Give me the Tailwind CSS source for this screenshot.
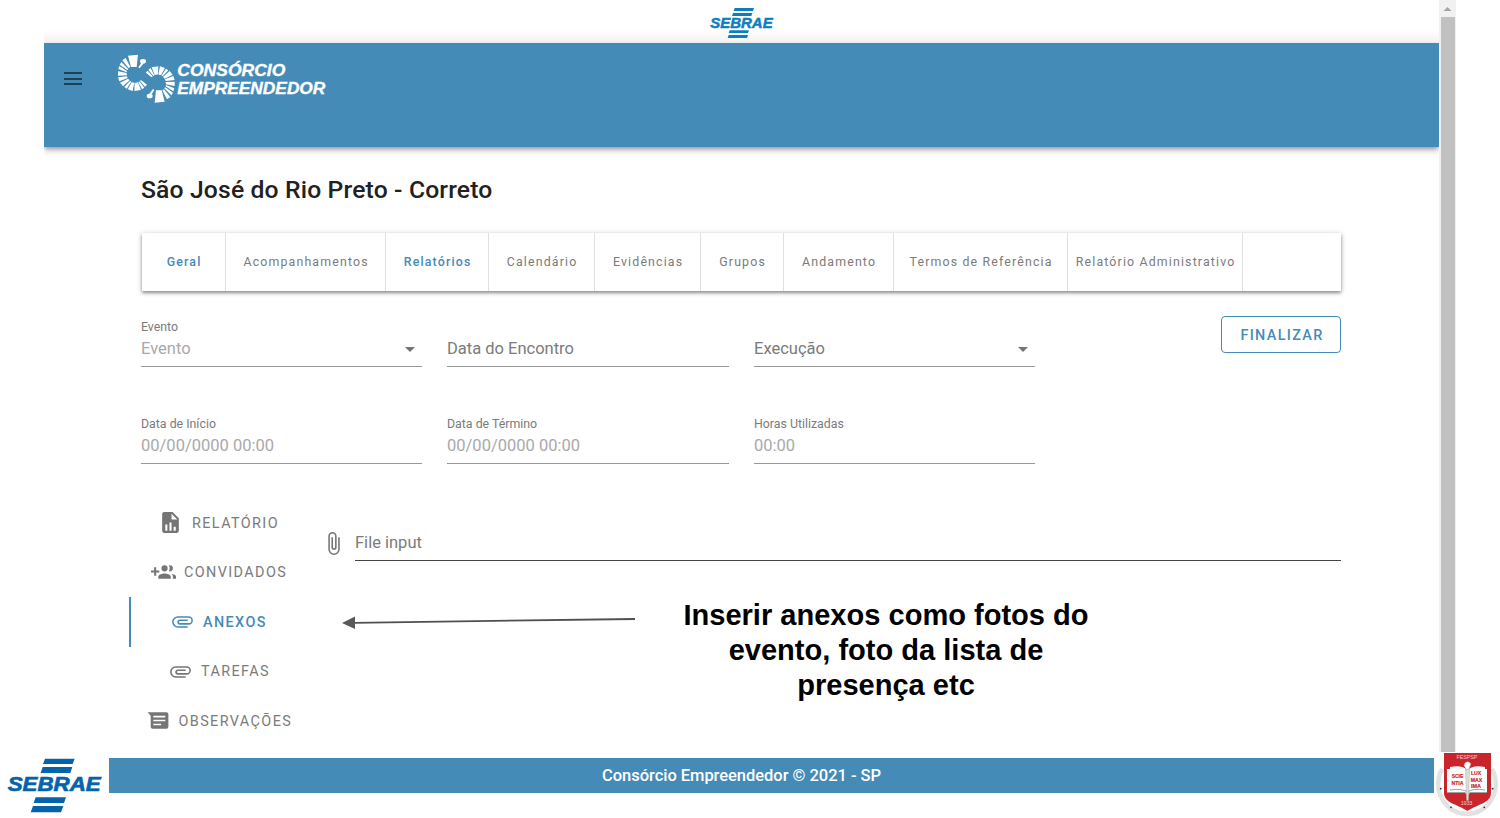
<!DOCTYPE html>
<html lang="pt-BR">
<head>
<meta charset="utf-8">
<title>Consórcio Empreendedor</title>
<script src="https://cdn.jsdelivr.net/npm/@tailwindcss/browser@4"></script>
</head>
<body class="w-[1500px] h-[818px] overflow-hidden bg-white font-['Roboto',sans-serif] text-[#7b7b7b]">
<div class="flex h-[752px] pl-11">
  <div class="w-[1395px] h-full shrink-0 overflow-hidden">
    <div class="h-[43px] pl-[7px] flex justify-center bg-linear-to-b from-white from-70% to-[#f1f1f1]">
      <svg class="w-[90px] h-[43px]" viewBox="0 0 270 129" fill="#0b7ec1">
        <path d="M104 24h58l-3 9h-58zM99 39h58l-3 9h-58zM89 91h58l-3 8h-58zM86 105h58l-3 9h-58z"/>
        <text x="31" y="85" font-family="Liberation Sans" font-weight="700" font-style="italic" font-size="44" textLength="187" lengthAdjust="spacingAndGlyphs" stroke="#0b7ec1" stroke-width="1.500">SEBRAE</text>
      </svg>
    </div>
    <header class="h-[104px] bg-[#458bb8] shadow-[0_2px_4px_-1px_rgba(0,0,0,0.3),0_4px_6px_rgba(0,0,0,0.2)] flex">
      <div class="ml-5 mt-[28px] flex flex-col gap-[3.5px] w-[18px] pt-px">
        <span class="h-[2px] bg-[#1f3f53]"></span><span class="h-[2px] bg-[#1f3f53]"></span><span class="h-[2px] bg-[#1f3f53]"></span>
      </div>
      <svg class="ml-[26px] mt-[7px] w-[230px] h-[60px]" viewBox="0 0 690 180" fill="#fff">
        <g id="arc">
          <path d="M60 17L90 14L86 51L69 51ZM91 52L100 38L106 41L95 55ZM43 31L53 24L67 51L62 54ZM35 44L40 36L61 57L58 60ZM31 57L34 48L57 63L56 67ZM30 77L30 64L56 69L57 76ZM34 94L30 82L57 79L59 84ZM45 109L36 98L60 86L65 91ZM56 116L49 111L66 93L70 95ZM74 123L59 118L71 97L79 98ZM99 120L79 123L80 99L90 97ZM109 113L102 118L91 96L94 94ZM117 104L111 110L96 93L99 90Z"/>
          <ellipse cx="105" cy="34" rx="9" ry="7"/>
        </g>
        <use href="#arc" transform="rotate(180 115 86)"/>
        <g font-family="Liberation Sans" font-weight="700" font-style="italic" font-size="50" stroke="#fff" stroke-width="1">
          <text x="208" y="79" textLength="324" lengthAdjust="spacingAndGlyphs">CONSÓRCIO</text>
          <text x="208" y="132" textLength="444" lengthAdjust="spacingAndGlyphs">EMPREENDEDOR</text>
        </g>
      </svg>
    </header>
    <main class="pl-[97px] pr-[98px]">
      <h1 class="h-[86px] flex items-center text-[24.7px] font-medium text-[#212121] tracking-[0.15px]">São José do Rio Preto - Correto</h1>
      <nav class="h-[58px] ml-px flex w-[1199px] text-[12.35px] tracking-[1.16px] whitespace-nowrap shadow-[0_2px_3px_rgba(0,0,0,0.35),0_1px_6px_rgba(0,0,0,0.2)] *:flex *:items-center *:justify-center *:border-r *:border-[#e0e0e0] *:pl-[1.2px]">
        <a class="w-[84px] font-medium text-[#458bb8]">Geral</a>
        <a class="w-[160px]">Acompanhamentos</a>
        <a class="w-[103px] font-medium text-[#458bb8]">Relatórios</a>
        <a class="w-[106px]">Calendário</a>
        <a class="w-[106px]">Evidências</a>
        <a class="w-[83px]">Grupos</a>
        <a class="w-[110px]">Andamento</a>
        <a class="w-[174px]">Termos de Referência</a>
        <a class="w-[175px]">Relatório Administrativo</a>
      </nav>
      <section class="mt-[25px] flex">
        <div class="w-[281px] h-[51px] border-b border-[#999] flex flex-col">
          <span class="mt-1 text-[12.35px] leading-[14px]">Evento</span>
          <div class="mt-1 flex items-center justify-between text-[16.5px] leading-[22px] text-[#a9a9a9]">Evento<svg class="w-6 h-6 -my-px" viewBox="0 0 24 24" fill="#757575"><path d="M7 10l5 5 5-5z"/></svg></div>
        </div>
        <div class="ml-[25px] w-[282px] h-[51px] border-b border-[#999] pt-[22px] text-[16.5px] leading-[22px]">Data do Encontro</div>
        <div class="ml-[25px] w-[281px] h-[51px] border-b border-[#999] pt-[22px]">
          <div class="flex items-center justify-between text-[16.5px] leading-[22px]">Execução<svg class="w-6 h-6 -my-px" viewBox="0 0 24 24" fill="#757575"><path d="M7 10l5 5 5-5z"/></svg></div>
        </div>
        <button class="ml-auto w-[120px] h-[37px] pt-0.5 pl-0.5 rounded-[4px] border border-[#458bb8] text-[#458bb8] text-[14.4px] font-medium tracking-[1.35px]">FINALIZAR</button>
      </section>
      <section class="mt-[46px] flex gap-[25px] text-[16.5px] *:h-[51px] *:border-b *:border-[#999] *:flex *:flex-col">
        <div class="w-[281px]"><span class="mt-1 text-[12.35px] leading-[14px]">Data de Início</span><span class="mt-1 leading-[22px] text-[#a9a9a9]">00/00/0000 00:00</span></div>
        <div class="w-[282px]"><span class="mt-1 text-[12.35px] leading-[14px]">Data de Término</span><span class="mt-1 leading-[22px] text-[#a9a9a9]">00/00/0000 00:00</span></div>
        <div class="w-[281px]"><span class="mt-1 text-[12.35px] leading-[14px]">Horas Utilizadas</span><span class="mt-1 leading-[22px] text-[#a9a9a9]">00:00</span></div>
      </section>
      <section class="mt-[34px] -ml-3 flex">
        <div class="w-[185px] text-[14.4px] tracking-[1.4px] *:h-[49.5px] *:flex *:items-center">
          <div class="pl-[29px]"><svg class="w-[25px] h-[25px] mr-[9px]" viewBox="0 0 24 24" fill="#757575"><path d="M13,9H18.5L13,3.5V9M6,2H14L20,8V20A2,2 0 0,1 18,22H6C4.89,22 4,21.1 4,20V4C4,2.89 4.89,2 6,2M7,20H9V14H7V20M11,20H13V12H11V20M15,20H17V16H15V20Z"/></svg><span class="pt-0.5">RELATÓRIO</span></div>
          <div class="pl-[22px]"><svg class="w-[25px] h-[25px] mr-2" viewBox="0 0 24 24" fill="#757575"><path d="M13,13C11,13 7,14 7,16V18H19V16C19,14 15,13 13,13M19.62,13.16C20.45,13.88 21,14.82 21,16V18H24V16C24,14.46 21.63,13.5 19.62,13.16M13,11A3,3 0 0,0 16,8A3,3 0 0,0 13,5A3,3 0 0,0 10,8A3,3 0 0,0 13,11M18,11A3,3 0 0,0 21,8A3,3 0 0,0 18,5C17.68,5 17.37,5.05 17.08,5.14C17.65,5.95 18,6.94 18,8C18,9.06 17.65,10.04 17.08,10.85C17.37,10.95 17.68,11 18,11M8,10H5V7H3V10H0V12H3V15H5V12H8V10Z"/></svg><span class="pt-0.5">CONVIDADOS</span></div>
          <div class="border-l-2 border-[#458bb8] pl-[39px] font-medium text-[#458bb8]"><svg class="w-[25px] h-[25px] mr-2" viewBox="0 0 24 24" fill="#458bb8"><path d="M7.5,18A5.5,5.5 0 0,1 2,12.5A5.5,5.5 0 0,1 7.5,7H18A4,4 0 0,1 22,11A4,4 0 0,1 18,15H9.5A2.5,2.5 0 0,1 7,12.5A2.5,2.5 0 0,1 9.5,10H17V11.5H9.5A1,1 0 0,0 8.5,12.5A1,1 0 0,0 9.5,13.5H18A2.5,2.5 0 0,0 20.5,11A2.5,2.5 0 0,0 18,8.5H7.5A4,4 0 0,0 3.5,12.5A4,4 0 0,0 7.5,16.5H17V18H7.5Z"/></svg><span class="pt-0.5">ANEXOS</span></div>
          <div class="pl-[39px]"><svg class="w-[25px] h-[25px] mr-2" viewBox="0 0 24 24" fill="#757575"><path d="M7.5,18A5.5,5.5 0 0,1 2,12.5A5.5,5.5 0 0,1 7.5,7H18A4,4 0 0,1 22,11A4,4 0 0,1 18,15H9.5A2.5,2.5 0 0,1 7,12.5A2.5,2.5 0 0,1 9.5,10H17V11.5H9.5A1,1 0 0,0 8.5,12.5A1,1 0 0,0 9.5,13.5H18A2.5,2.5 0 0,0 20.5,11A2.5,2.5 0 0,0 18,8.5H7.5A4,4 0 0,0 3.5,12.5A4,4 0 0,0 7.5,16.5H17V18H7.5Z"/></svg><span class="pt-0.5">TAREFAS</span></div>
          <div class="pl-[16.5px]"><svg class="w-[25px] h-[25px] mr-2" viewBox="0 0 24 24" fill="#757575"><path fill-rule="evenodd" d="M1.500 4H19.500A2 2 0 0 1 21.500 6V18A2 2 0 0 1 19.500 20H6.500A2 2 0 0 1 4.500 18V7.500ZM7 7.500V9H18.500V7.500ZM7 11.300V12.800H18.500V11.300ZM7 15V16.500H14.500V15Z"/></svg><span class="pt-0.5">OBSERVAÇÕES</span></div>
        </div>
        <div class="w-[1027px] shrink-0 pt-[31px]">
          <div class="flex pl-[7px]">
            <svg class="w-[25px] h-[25px] mt-0.5" viewBox="0 0 24 24" fill="#757575"><path d="M16.5,6V17.5A4,4 0 0,1 12.5,21.5A4,4 0 0,1 8.5,17.5V5A2.5,2.5 0 0,1 11,2.5A2.5,2.5 0 0,1 13.5,5V15.5A1,1 0 0,1 12.5,16.5A1,1 0 0,1 11.5,15.5V6H10V15.5A2.5,2.5 0 0,0 12.5,18A2.5,2.5 0 0,0 15,15.5V5A4,4 0 0,0 11,1A4,4 0 0,0 7,5V17.5A5.5,5.5 0 0,0 12.500,23A5.5,5.5 0 0,0 18,17.5V6H16.5Z"/></svg>
            <div class="ml-[9px] w-[986px] h-8 border-b border-[#444] text-[16.5px] leading-[28px]">File input</div>
          </div>
          <div class="flex mt-[36px]">
            <svg class="ml-[26px] mt-[15px] w-[300px] h-[20px]" viewBox="0 0 300 20"><path d="M14 10.800L295 7" stroke="#505050" stroke-width="1.800"/><path d="M2 11L15 4.500V17Z" fill="#595959"/></svg>
            <p class="ml-[26px] mt-px w-[440px] text-center text-black font-bold font-['Liberation_Sans',sans-serif] text-[29.05px] leading-[35px]">Inserir anexos como fotos do<br>evento, foto da lista de<br>presença etc</p>
          </div>
        </div>
      </section>
    </main>
  </div>
  <div class="w-[17px] h-full bg-[#f1f1f1] flex flex-col items-center">
    <svg class="w-[17px] h-[17px] shrink-0" viewBox="0 0 17 17" fill="#a3a3a3"><path d="M4.500 11L8.500 7L12.500 11Z"/></svg>
    <div class="w-[14px] grow bg-[#c1c1c1]"></div>
  </div>
</div>
<footer class="flex h-[66px]">
  <svg class="w-[109px] h-[66px]" viewBox="0 6 327 198" fill="#0463ab">
    <path d="M135 26h89l-6 16h-89zM128 51h89l-6 18h-89zM107 142h91l-6 17h-91zM99 168h91l-7 19h-91z"/>
    <text x="23" y="124" font-family="Liberation Sans" font-weight="700" font-style="italic" font-size="60" textLength="279" lengthAdjust="spacingAndGlyphs" stroke="#0463ab" stroke-width="2">SEBRAE</text>
  </svg>
  <div class="mt-1.5 w-[1325px] h-[35px] bg-[#458bb8] text-white text-[16.5px] font-medium flex items-center justify-center pt-0.5 pr-[60px] tracking-[-0.04px]">Consórcio Empreendedor © 2021 - SP</div>
  <svg class="w-[66px] h-[66px]" viewBox="0 0 66 66">
    <path d="M8 17A28.800 30 0 1 0 58 17" fill="none" stroke="#e2e2e2" stroke-width="4.500"/>
    <g fill="#333"><circle cx="6.700" cy="36.700" r=".9"/><circle cx="58.700" cy="36.700" r=".9"/><circle cx="17" cy="55.300" r=".9"/><circle cx="50.300" cy="55.300" r=".9"/></g>
    <path d="M10 1H57V41C57 51 44 52 33.500 59C23 52 10 51 10 41Z" fill="#c9252d"/>
    <path d="M16 15Q28 12.500 33.500 18Q39 12.500 51 15V17H53V41H36L33.500 43L31 41H13V17H16Z" fill="#fff"/>
    <path d="M13 40.500H31L33.500 42.500L36 40.500H53M16 38Q28 36 33.500 40Q39 36 51 38" fill="none" stroke="#777" stroke-width=".7"/>
    <path d="M33.500 18V40" stroke="#999" stroke-width="1"/>
    <path d="M31.500 17H35.500L34.500 48.500H32.500Z" fill="#ddd" stroke="#999" stroke-width=".4"/>
    <path d="M30 13.500Q31 9 35 10Q38 11.500 36 14L35 17H32Z" fill="#fff" stroke="#aaa" stroke-width=".4"/>
    <g font-family="Liberation Sans" font-weight="700" text-anchor="middle" fill="#c9252d" stroke="#c9252d" stroke-width=".2" font-size="6.200">
      <text x="23.500" y="26" textLength="11.500" lengthAdjust="spacingAndGlyphs">SCIE</text><text x="23.500" y="32.500" textLength="12" lengthAdjust="spacingAndGlyphs">NTIA</text>
      <text x="42" y="22.500" textLength="10" lengthAdjust="spacingAndGlyphs">LUX</text><text x="42.500" y="29.500" textLength="11.500" lengthAdjust="spacingAndGlyphs">MAX</text><text x="42" y="36" textLength="10" lengthAdjust="spacingAndGlyphs">IMA</text>
    </g>
    <g font-family="Liberation Sans" text-anchor="middle" fill="#f3c9cb" font-size="5.500"><text x="33" y="7" textLength="21">FESPSP</text><text x="32.500" y="52.500" textLength="11.500">1933</text></g>
  </svg>
</footer>
</body>
</html>
